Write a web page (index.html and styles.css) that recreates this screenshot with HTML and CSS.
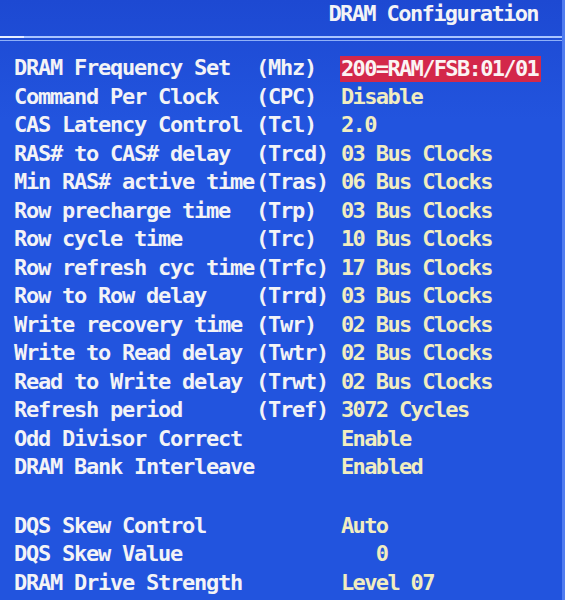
FILE: index.html
```html
<!DOCTYPE html>
<html lang="en">
<head>
  <meta charset="UTF-8" />
  <title>DRAM Configuration</title>
  <link rel="stylesheet" href="styles.css">
</head>
<body>
  <div class="screen">
    <div class="header">
      <div class="title">DRAM Configuration</div>
    </div>
    <div class="rule"><span class="rule-tick"></span></div>

    <div class="settings">
      <div class="row">
        <span class="label">DRAM Frequency Set</span><span class="unit">(Mhz)</span><span class="value selected">200=RAM/FSB:01/01</span>
      </div>
      <div class="row">
        <span class="label">Command Per Clock</span><span class="unit">(CPC)</span><span class="value">Disable</span>
      </div>
      <div class="row">
        <span class="label">CAS Latency Control</span><span class="unit">(Tcl)</span><span class="value">2.0</span>
      </div>
      <div class="row">
        <span class="label">RAS# to CAS# delay</span><span class="unit">(Trcd)</span><span class="value">03 Bus Clocks</span>
      </div>
      <div class="row">
        <span class="label">Min RAS# active time</span><span class="unit">(Tras)</span><span class="value">06 Bus Clocks</span>
      </div>
      <div class="row">
        <span class="label">Row precharge time</span><span class="unit">(Trp)</span><span class="value">03 Bus Clocks</span>
      </div>
      <div class="row">
        <span class="label">Row cycle time</span><span class="unit">(Trc)</span><span class="value">10 Bus Clocks</span>
      </div>
      <div class="row">
        <span class="label">Row refresh cyc time</span><span class="unit">(Trfc)</span><span class="value">17 Bus Clocks</span>
      </div>
      <div class="row">
        <span class="label">Row to Row delay</span><span class="unit">(Trrd)</span><span class="value">03 Bus Clocks</span>
      </div>
      <div class="row">
        <span class="label">Write recovery time</span><span class="unit">(Twr)</span><span class="value">02 Bus Clocks</span>
      </div>
      <div class="row">
        <span class="label">Write to Read delay</span><span class="unit">(Twtr)</span><span class="value">02 Bus Clocks</span>
      </div>
      <div class="row">
        <span class="label">Read to Write delay</span><span class="unit">(Trwt)</span><span class="value">02 Bus Clocks</span>
      </div>
      <div class="row">
        <span class="label">Refresh period</span><span class="unit">(Tref)</span><span class="value">3072 Cycles</span>
      </div>
      <div class="row">
        <span class="label">Odd Divisor Correct</span><span class="unit"></span><span class="value">Enable</span>
      </div>
      <div class="row">
        <span class="label">DRAM Bank Interleave</span><span class="unit"></span><span class="value">Enabled</span>
      </div>
      <div class="row blank"></div>
      <div class="row">
        <span class="label">DQS Skew Control</span><span class="unit"></span><span class="value">Auto</span>
      </div>
      <div class="row">
        <span class="label">DQS Skew Value</span><span class="unit"></span><span class="value">   0</span>
      </div>
      <div class="row">
        <span class="label">DRAM Drive Strength</span><span class="unit"></span><span class="value">Level 07</span>
      </div>
    </div>
  </div>
</body>
</html>
```

FILE: styles.css
```css
:root {
  --bios-blue: #2254de;
  --bios-blue-dark: #1d49d2;
  --label: #f3f3f6;
  --value: #f1edc0;
  --select: #d3284a;
  --rule: #a9c4ff;
}

* {
  box-sizing: border-box;
  margin: 0;
  padding: 0;
}

body {
  background: var(--bios-blue);
  font-family: "DejaVu Sans Mono", "Liberation Mono", monospace;
  font-weight: bold;
  font-size: 22px;
  letter-spacing: -1.25px;
  color: var(--label);
  height: 600px;
  overflow: hidden;
}

.screen {
  height: 600px;
  background: linear-gradient(to bottom, var(--bios-blue-dark) 0, var(--bios-blue) 120px, var(--bios-blue) 100%);
  border-right: 3px solid #4f7cf0;
}

.header {
  height: 35px;
  display: flex;
  justify-content: flex-end;
  align-items: flex-start;
  padding-right: 24px;
}

.title {
  color: var(--label);
  line-height: 28px;
  letter-spacing: -1.6px;
}

.rule {
  position: relative;
  height: 5px;
  margin-top: 1px;
  border-top: 2px solid var(--rule);
  border-bottom: 1px solid #8fb0f8;
}

.rule-tick {
  position: absolute;
  left: 0;
  top: -2px;
  width: 24px;
  height: 2px;
  background: #e6eeff;
}

.settings {
  padding: 13px 0 0 14px;
}

.row {
  display: grid;
  grid-template-columns: 242px 85px auto;
  height: 28.5px;
  line-height: 28.5px;
  white-space: pre;
}

.row.blank {
  height: 30px;
}

.label,
.unit {
  color: var(--label);
}

.value {
  color: var(--value);
  justify-self: start;
  letter-spacing: -1.65px;
}

.value.selected {
  background: var(--select);
  color: #fbf4f4;
  padding: 0 3px 0 1px;
  margin-left: -1px;
  line-height: 26px;
  height: 26px;
  margin-top: 2px;
}
```
